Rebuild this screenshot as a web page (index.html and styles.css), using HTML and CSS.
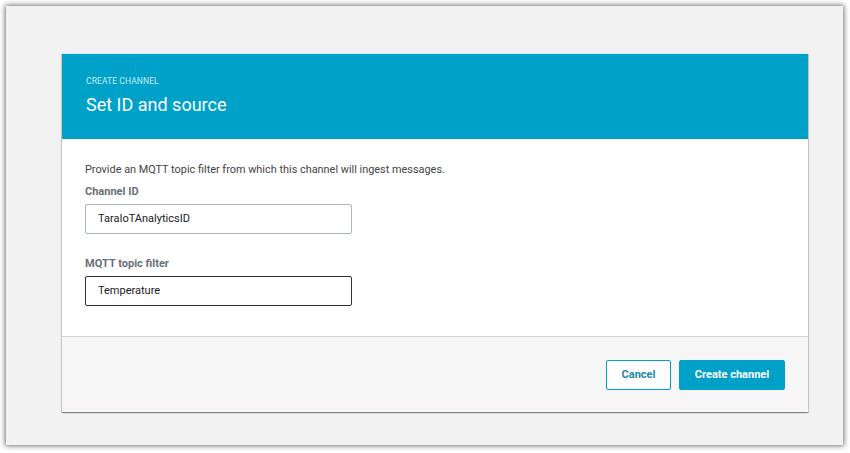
FILE: index.html
```html
<!DOCTYPE html>
<html>
<head>
<meta charset="utf-8">
<link rel="stylesheet" href="styles.css">
</head>
<body>
<div class="frame">
  <div class="card">
    <div class="card-header">
      <div class="eyebrow">CREATE CHANNEL</div>
      <h1 class="title">Set ID and source</h1>
    </div>
    <div class="card-body">
      <p class="intro">Provide an MQTT topic filter from which this channel will ingest messages.</p>
      <div class="field">
        <label class="label">Channel ID</label>
        <div class="input">TaraIoTAnalyticsID</div>
      </div>
      <div class="field">
        <label class="label">MQTT topic filter</label>
        <div class="input input-focus">Temperature</div>
      </div>
    </div>
    <div class="card-footer">
      <button class="btn btn-secondary">Cancel</button>
      <button class="btn btn-primary">Create channel</button>
    </div>
  </div>
</div>
</body>
</html>
```
FILE: styles.css
```css
* { box-sizing: border-box; }
html, body { margin: 0; padding: 0; background: #ffffff; }
body {
  font-family: Roboto, "Liberation Sans", sans-serif;
  width: 850px;
  height: 453px;
  overflow: hidden;
  padding: 6px 7px 8px 6px;
}
.frame {
  width: 837px;
  height: 439px;
  background: #f2f2f2;
  box-shadow: 0 0 5px 1px rgba(0,0,0,0.55);
  padding: 47px 35px 0 56px;
}
.card {
  width: 746px;
  background: #fff;
  box-shadow: 0 1px 1px 0 rgba(0,28,36,0.3), 1px 1px 1px 0 rgba(0,28,36,0.15), -1px 1px 1px 0 rgba(0,28,36,0.15);
}
.card-header {
  background: #00a1c9;
  height: 86px;
  padding: 21px 24px 0 24px;
  border-top: 1px solid #cdeef6;
}
.eyebrow {
  font-size: 8.5px;
  color: #c6ebf4;
  letter-spacing: 0.1px;
  line-height: 12px;
}
.title {
  margin: 6px 0 0 0;
  font-size: 18px;
  font-weight: 400;
  color: #fff;
  line-height: 24px;
}
.card-body {
  padding: 23px 23px 30px 23px;
}
.intro {
  margin: 0 0 6px 0;
  font-size: 10.9px;
  color: #444;
  line-height: 16px;
}
.field { margin-bottom: 22px; }
.field:last-child { margin-bottom: 0; }
.label {
  display: block;
  font-size: 11px;
  font-weight: 700;
  color: #687078;
  line-height: 16px;
  margin-bottom: 4px;
}
.input {
  width: 267px;
  height: 30px;
  border: 1px solid #aab7b8;
  border-radius: 2px;
  padding: 0 12px;
  font-size: 11px;
  color: #16191f;
  line-height: 28px;
  background: #fff;
}
.input-focus { border-color: #2a3238; }
.card-footer {
  background: #f6f6f6;
  border-top: 1px solid #d3d3d3;
  height: 76px;
  display: flex;
  justify-content: flex-end;
  align-items: center;
  gap: 8px;
  padding: 0 23px 0 0;
}
.btn {
  font-family: inherit;
  font-size: 11px;
  font-weight: 700;
  height: 30px;
  border-radius: 2px;
  cursor: pointer;
}
.btn-secondary {
  width: 65px;
  background: #fff;
  border: 1px solid #00a1c9;
  color: #1b87ad;
}
.btn-primary {
  width: 106px;
  background: #00a1c9;
  border: 1px solid #00a1c9;
  color: #fff;
}
```
